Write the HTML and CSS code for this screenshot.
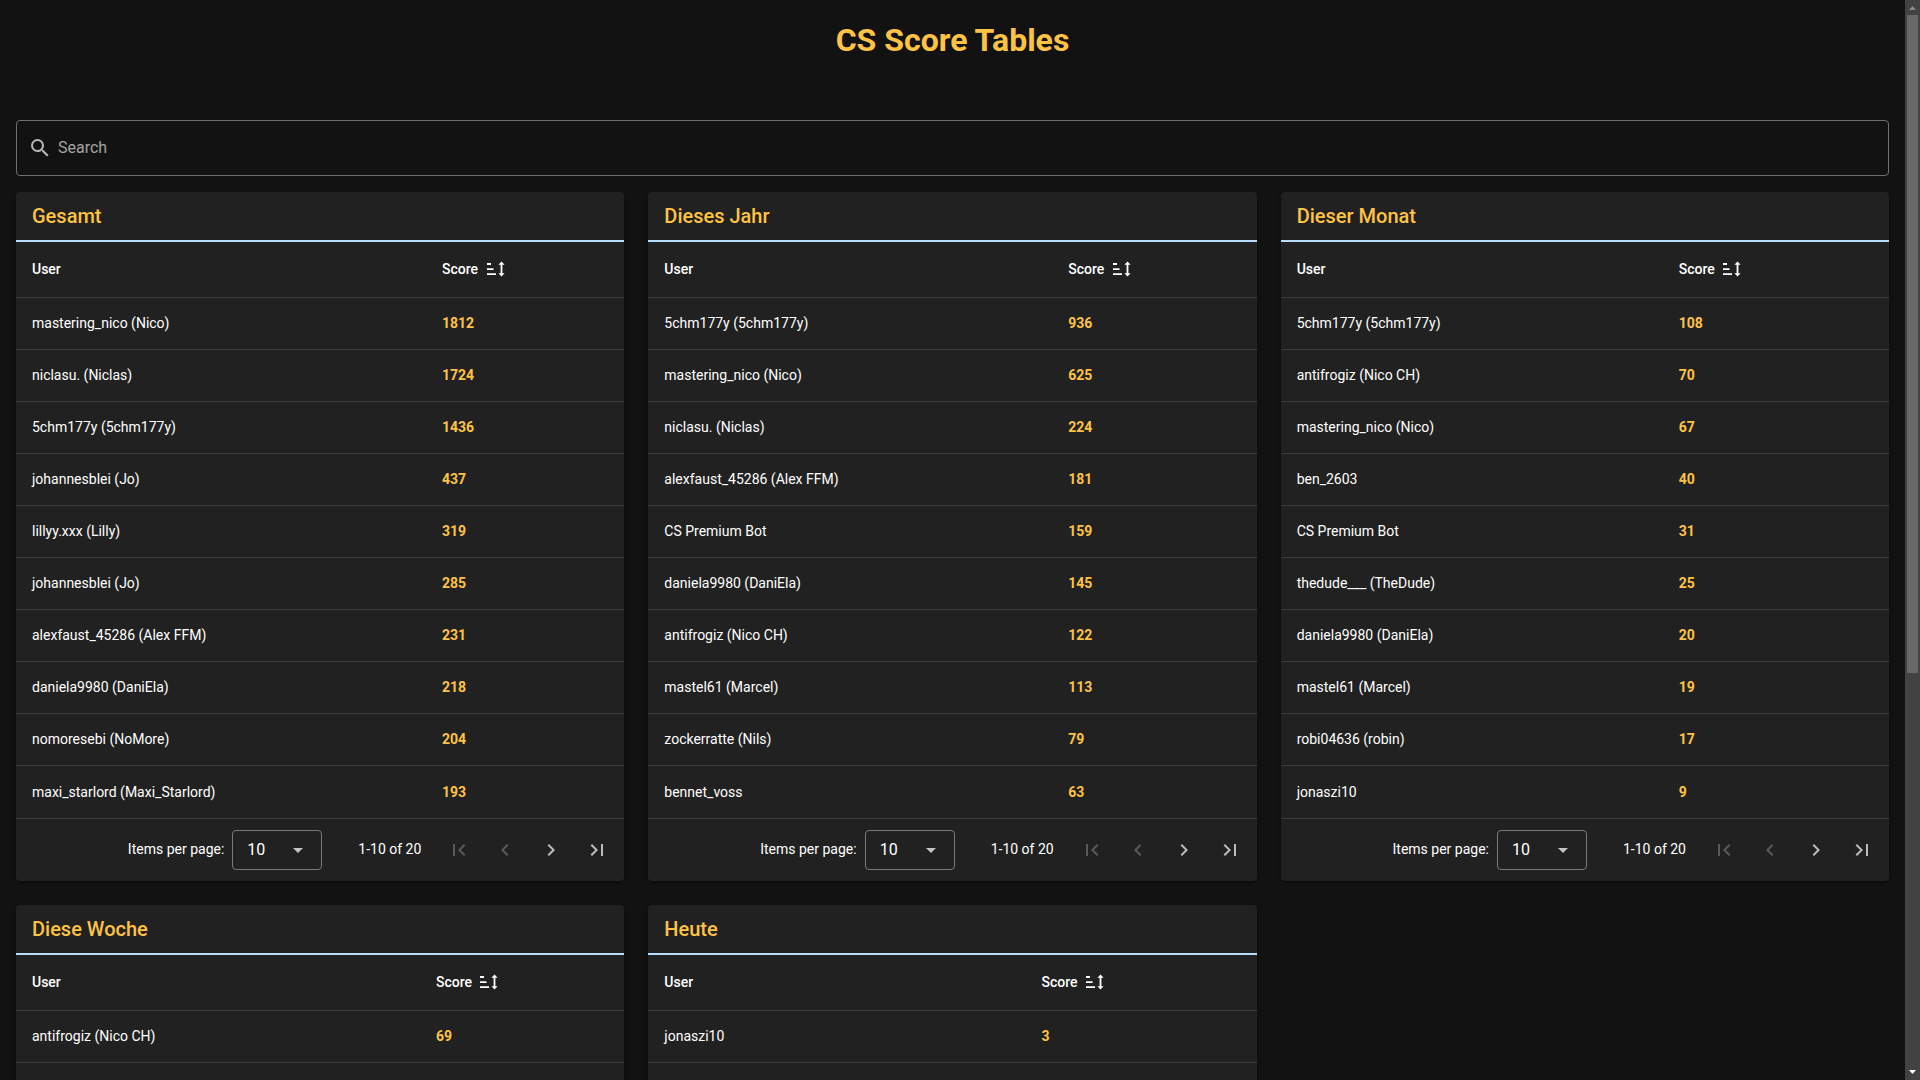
FILE: index.html
```
<!DOCTYPE html>
<html lang="de">
<head>
    <meta charset="UTF-8">
    <meta name="viewport" content="width=device-width, initial-scale=1.0">
    <title>CS Score Tables</title>
    <link rel="stylesheet" href="styles.css">
</head>
<body>
    <svg class="icon-defs" aria-hidden="true">
        <symbol id="magnify" viewBox="0 0 24 24"><path d="M9.5,3A6.5,6.5 0 0,1 16,9.5C16,11.11 15.41,12.59 14.44,13.73L14.71,14H15.5L20.5,19L19,20.5L14,15.5V14.71L13.73,14.44C12.59,15.41 11.11,16 9.5,16A6.5,6.5 0 0,1 3,9.5A6.5,6.5 0 0,1 9.5,3M9.5,5C7,5 5,7 5,9.5C5,12 7,14 9.5,14C12,14 14,12 14,9.5C14,7 12,5 9.5,5Z"/></symbol>
        <symbol id="sort" viewBox="0 0 18 16"><path d="M0,2H4V4H0ZM0,7.3H6.5V9H0ZM0,12.3H9V14H0ZM14.5,0.5L17.6,3.8H15.4V12.2H17.6L14.5,15.5L11.4,12.2H13.6V3.8H11.4Z"/></symbol>
        <symbol id="menu-down" viewBox="0 0 24 24"><path d="M7,10L12,15L17,10H7Z"/></symbol>
        <symbol id="page-first" viewBox="0 0 24 24"><path d="M18.41,16.59L13.82,12L18.41,7.41L17,6L11,12L17,18L18.41,16.59M6,6H8V18H6V6Z"/></symbol>
        <symbol id="chevron-left" viewBox="0 0 24 24"><path d="M15.41,16.58L10.83,12L15.41,7.41L14,6L8,12L14,18L15.41,16.58Z"/></symbol>
        <symbol id="chevron-right" viewBox="0 0 24 24"><path d="M8.59,16.58L13.17,12L8.59,7.41L10,6L16,12L10,18L8.59,16.58Z"/></symbol>
        <symbol id="page-last" viewBox="0 0 24 24"><path d="M5.59,7.41L10.18,12L5.59,16.59L7,18L13,12L7,6L5.59,7.41M16,6H18V18H16V6Z"/></symbol>
    </svg>

    <main class="page">
        <h1>CS Score Tables</h1>

        <div class="search">
            <svg class="icon"><use href="#magnify"/></svg>
            <input type="text" placeholder="Search" aria-label="Search">
        </div>

        <div class="cards">
            <section class="card">
                <h2>Gesamt</h2>
                <table class="total">
                    <thead>
                        <tr><th>User</th><th>Score <svg class="sort"><use href="#sort"/></svg></th></tr>
                    </thead>
                    <tbody>
                        <tr><td>mastering_nico (Nico)</td><td class="score">1812</td></tr>
                        <tr><td>niclasu. (Niclas)</td><td class="score">1724</td></tr>
                        <tr><td>5chm177y (5chm177y)</td><td class="score">1436</td></tr>
                        <tr><td>johannesblei (Jo)</td><td class="score">437</td></tr>
                        <tr><td>lillyy.xxx (Lilly)</td><td class="score">319</td></tr>
                        <tr><td>johannesblei (Jo)</td><td class="score">285</td></tr>
                        <tr><td>alexfaust_45286 (Alex FFM)</td><td class="score">231</td></tr>
                        <tr><td>daniela9980 (DaniEla)</td><td class="score">218</td></tr>
                        <tr><td>nomoresebi (NoMore)</td><td class="score">204</td></tr>
                        <tr><td>maxi_starlord (Maxi_Starlord)</td><td class="score">193</td></tr>
                    </tbody>
                </table>
                <div class="footer">
                    <label for="items-total">Items per page:</label>
                    <div class="select">
                        <select id="items-total"><option>10</option></select>
                        <svg class="icon"><use href="#menu-down"/></svg>
                    </div>
                    <span class="info">1-10 of 20</span>
                    <button disabled aria-label="First page"><svg class="icon"><use href="#page-first"/></svg></button>
                    <button disabled aria-label="Previous page"><svg class="icon"><use href="#chevron-left"/></svg></button>
                    <button aria-label="Next page"><svg class="icon"><use href="#chevron-right"/></svg></button>
                    <button aria-label="Last page"><svg class="icon"><use href="#page-last"/></svg></button>
                </div>
            </section>

            <section class="card">
                <h2>Dieses Jahr</h2>
                <table class="year">
                    <thead>
                        <tr><th>User</th><th>Score <svg class="sort"><use href="#sort"/></svg></th></tr>
                    </thead>
                    <tbody>
                        <tr><td>5chm177y (5chm177y)</td><td class="score">936</td></tr>
                        <tr><td>mastering_nico (Nico)</td><td class="score">625</td></tr>
                        <tr><td>niclasu. (Niclas)</td><td class="score">224</td></tr>
                        <tr><td>alexfaust_45286 (Alex FFM)</td><td class="score">181</td></tr>
                        <tr><td>CS Premium Bot</td><td class="score">159</td></tr>
                        <tr><td>daniela9980 (DaniEla)</td><td class="score">145</td></tr>
                        <tr><td>antifrogiz (Nico CH)</td><td class="score">122</td></tr>
                        <tr><td>mastel61 (Marcel)</td><td class="score">113</td></tr>
                        <tr><td>zockerratte (Nils)</td><td class="score">79</td></tr>
                        <tr><td>bennet_voss</td><td class="score">63</td></tr>
                    </tbody>
                </table>
                <div class="footer">
                    <label for="items-year">Items per page:</label>
                    <div class="select">
                        <select id="items-year"><option>10</option></select>
                        <svg class="icon"><use href="#menu-down"/></svg>
                    </div>
                    <span class="info">1-10 of 20</span>
                    <button disabled aria-label="First page"><svg class="icon"><use href="#page-first"/></svg></button>
                    <button disabled aria-label="Previous page"><svg class="icon"><use href="#chevron-left"/></svg></button>
                    <button aria-label="Next page"><svg class="icon"><use href="#chevron-right"/></svg></button>
                    <button aria-label="Last page"><svg class="icon"><use href="#page-last"/></svg></button>
                </div>
            </section>

            <section class="card">
                <h2>Dieser Monat</h2>
                <table class="month">
                    <thead>
                        <tr><th>User</th><th>Score <svg class="sort"><use href="#sort"/></svg></th></tr>
                    </thead>
                    <tbody>
                        <tr><td>5chm177y (5chm177y)</td><td class="score">108</td></tr>
                        <tr><td>antifrogiz (Nico CH)</td><td class="score">70</td></tr>
                        <tr><td>mastering_nico (Nico)</td><td class="score">67</td></tr>
                        <tr><td>ben_2603</td><td class="score">40</td></tr>
                        <tr><td>CS Premium Bot</td><td class="score">31</td></tr>
                        <tr><td>thedude___ (TheDude)</td><td class="score">25</td></tr>
                        <tr><td>daniela9980 (DaniEla)</td><td class="score">20</td></tr>
                        <tr><td>mastel61 (Marcel)</td><td class="score">19</td></tr>
                        <tr><td>robi04636 (robin)</td><td class="score">17</td></tr>
                        <tr><td>jonaszi10</td><td class="score">9</td></tr>
                    </tbody>
                </table>
                <div class="footer">
                    <label for="items-month">Items per page:</label>
                    <div class="select">
                        <select id="items-month"><option>10</option></select>
                        <svg class="icon"><use href="#menu-down"/></svg>
                    </div>
                    <span class="info">1-10 of 20</span>
                    <button disabled aria-label="First page"><svg class="icon"><use href="#page-first"/></svg></button>
                    <button disabled aria-label="Previous page"><svg class="icon"><use href="#chevron-left"/></svg></button>
                    <button aria-label="Next page"><svg class="icon"><use href="#chevron-right"/></svg></button>
                    <button aria-label="Last page"><svg class="icon"><use href="#page-last"/></svg></button>
                </div>
            </section>

            <section class="card">
                <h2>Diese Woche</h2>
                <table class="week">
                    <thead>
                        <tr><th>User</th><th>Score <svg class="sort"><use href="#sort"/></svg></th></tr>
                    </thead>
                    <tbody>
                        <tr><td>antifrogiz (Nico CH)</td><td class="score">69</td></tr>
                        <tr><td></td><td class="score"></td></tr>
                    </tbody>
                </table>
            </section>

            <section class="card">
                <h2>Heute</h2>
                <table class="today">
                    <thead>
                        <tr><th>User</th><th>Score <svg class="sort"><use href="#sort"/></svg></th></tr>
                    </thead>
                    <tbody>
                        <tr><td>jonaszi10</td><td class="score">3</td></tr>
                        <tr><td></td><td class="score"></td></tr>
                    </tbody>
                </table>
            </section>
        </div>
    </main>

    <div class="scrollbar" aria-hidden="true">
        <svg class="arrow up" viewBox="0 0 15 15"><path d="M4,10L7.5,6L11,10Z"/></svg>
        <div class="track"><div class="thumb"></div></div>
        <svg class="arrow down" viewBox="0 0 15 15"><path d="M4,5L7.5,9L11,5Z"/></svg>
    </div>
</body>
</html>
```
FILE: styles.css
```
* {
    box-sizing: border-box;
}

body {
    display: flex;
    height: 100vh;
    margin: 0;
    overflow: hidden;
    background-color: #121212;
    color: #fff;
    font-family: Roboto, sans-serif;
    font-size: 14px;
    line-height: 20px;
}

.icon-defs {
    position: absolute;
    width: 0;
    height: 0;
}

.icon {
    width: 24px;
    height: 24px;
    flex: none;
    fill: currentColor;
}

.page {
    flex: 1;
    min-width: 0;
    padding: 16px;
    overflow: hidden;
}

h1 {
    margin: 0 0 56px;
    color: #ffc344;
    font-size: 32px;
    line-height: 48px;
    text-align: center;
}

.search {
    display: flex;
    align-items: center;
    gap: 6px;
    height: 56px;
    margin-bottom: 16px;
    padding: 0 12px 0 11px;
    border: 1px solid #707070;
    border-radius: 4px;
    color: #b8b8b8;
}

.search input {
    flex: 1;
    padding: 0;
    border: none;
    outline: none;
    background: none;
    color: #fff;
    font: inherit;
    font-size: 16px;
}

.search input::placeholder {
    color: #a5a5a5;
}

.cards {
    display: grid;
    grid-template-columns: repeat(3, 1fr);
    align-items: start;
    gap: 24px;
}

.card {
    border-radius: 4px;
    background-color: #212121;
    box-shadow: 0 3px 1px -2px rgba(0, 0, 0, 0.2), 0 2px 2px rgba(0, 0, 0, 0.14), 0 1px 5px rgba(0, 0, 0, 0.12);
}

h2 {
    margin: 0;
    padding: 8px 16px;
    border-bottom: 2px solid #b8deff;
    color: #ffc344;
    font-size: 20px;
    font-weight: 500;
    line-height: 32px;
}

table {
    width: 100%;
    border-collapse: separate;
    border-spacing: 0;
}

th,
td {
    height: 52px;
    padding: 0 16px 1px;
    border-bottom: 1px solid #3b3b3b;
    text-align: left;
}

th {
    height: 56px;
    font-weight: 500;
}

tbody tr:last-child td {
    border-bottom: none;
}

.score {
    color: #ffc344;
    font-weight: 700;
}

.total th:first-child {
    width: 67.4%;
}

.year th:first-child {
    width: 66.4%;
}

.month th:first-child {
    width: 62.8%;
}

.week th:first-child {
    width: 66.4%;
}

.today th:first-child {
    width: 62%;
}

.sort {
    width: 18px;
    height: 16px;
    margin-left: 5px;
    fill: #fff;
    vertical-align: -3px;
}

.footer {
    display: flex;
    align-items: center;
    justify-content: flex-end;
    padding: 8px 4px;
    border-top: 1px solid #3b3b3b;
}

.footer label {
    padding-bottom: 2px;
}

.select {
    display: flex;
    align-items: center;
    position: relative;
    margin-left: 8px;
    color: #c4c4c4;
}

.select select {
    width: 90px;
    height: 40px;
    padding: 0 14px;
    border: 1px solid #7a7a7a;
    border-radius: 4px;
    appearance: none;
    background: none;
    color: #fff;
    font: inherit;
    font-size: 16px;
}

.select .icon {
    position: absolute;
    right: 12px;
    pointer-events: none;
}

.info {
    padding: 0 15px 2px 36px;
}

.footer button {
    display: flex;
    align-items: center;
    justify-content: center;
    width: 46px;
    height: 46px;
    padding: 0;
    border: none;
    border-radius: 50%;
    background: none;
    color: #bcbcbc;
    cursor: pointer;
}

.footer button:disabled {
    color: #5a5a5a;
    cursor: default;
}

.scrollbar {
    display: flex;
    flex-direction: column;
    width: 15px;
    background-color: #424242;
}

.arrow {
    width: 15px;
    height: 15px;
}

.arrow.up {
    fill: #8a8a8a;
}

.arrow.down {
    fill: #fff;
}

.track {
    flex: 1;
    padding: 0 2px;
}

.thumb {
    height: 62.7%;
    background-color: #686868;
}
```
